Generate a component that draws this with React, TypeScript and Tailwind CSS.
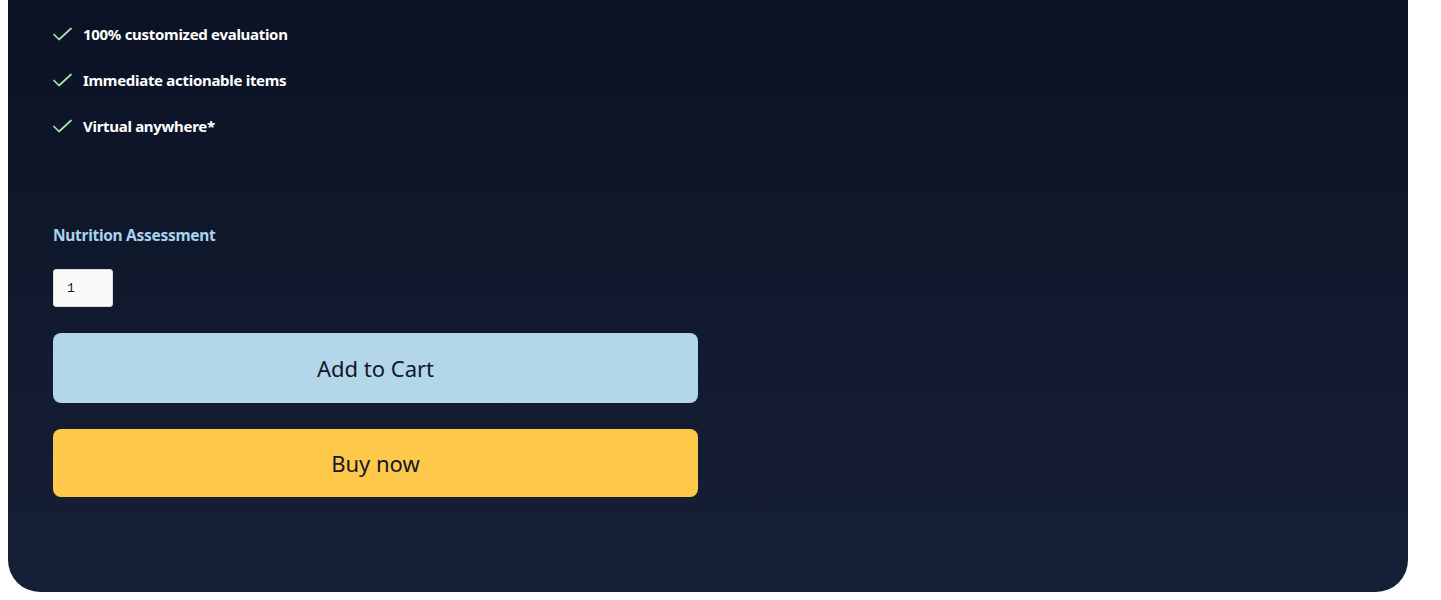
const features = ["100% customized evaluation", "Immediate actionable items", "Virtual anywhere*"];

function CheckMark() {
  return (
    <svg width="19" height="14" viewBox="0 0 19 14" fill="none" className="shrink-0">
      <path d="M1 7.5 6 12.5 18 1.5" stroke="#a6e3b2" strokeWidth="1.7" strokeLinecap="round" strokeLinejoin="round" />
    </svg>
  );
}

export default function App() {
  return (
    <div className="w-[1441px] h-[600px] bg-white overflow-hidden font-['Noto_Sans',sans-serif]">
      <div className="ml-2 w-[1400px] h-[592px] rounded-b-[32px] bg-gradient-to-b from-[#0c1225] to-[#162036] px-[45px] pt-[24px]">
        <ul className="flex flex-col gap-[26px]">
          {features.map((f) => (
            <li key={f} className="flex items-center gap-[11px] h-[20px]">
              <CheckMark />
              <span className="text-white text-[15px] font-bold tracking-[-0.3px]">{f}</span>
            </li>
          ))}
        </ul>

        <div className="mt-[89px] text-[#a9d3ee] text-[15.5px] font-bold tracking-[-0.3px] leading-[20px]">Nutrition Assessment</div>

        <input
          type="number"
          defaultValue={1}
          className="mt-[24px] block w-[60px] h-[38px] bg-[#fafafa] rounded-[3px] border border-[#dcdcdc] pl-[13px] text-[13px] text-[#1a1a1a] font-['Liberation_Mono',monospace] outline-none"
        />

        <div className="mt-[26px] flex flex-col gap-[26px] w-[645px]">
          <button className="h-[70px] rounded-[8px] bg-[#b3d6e9] text-[#111827] text-[22px]">
            Add to Cart
          </button>
          <button className="h-[68px] rounded-[8px] bg-[#fec84b] text-[#111827] text-[22px]">
            Buy now
          </button>
        </div>
      </div>
    </div>
  );
}
